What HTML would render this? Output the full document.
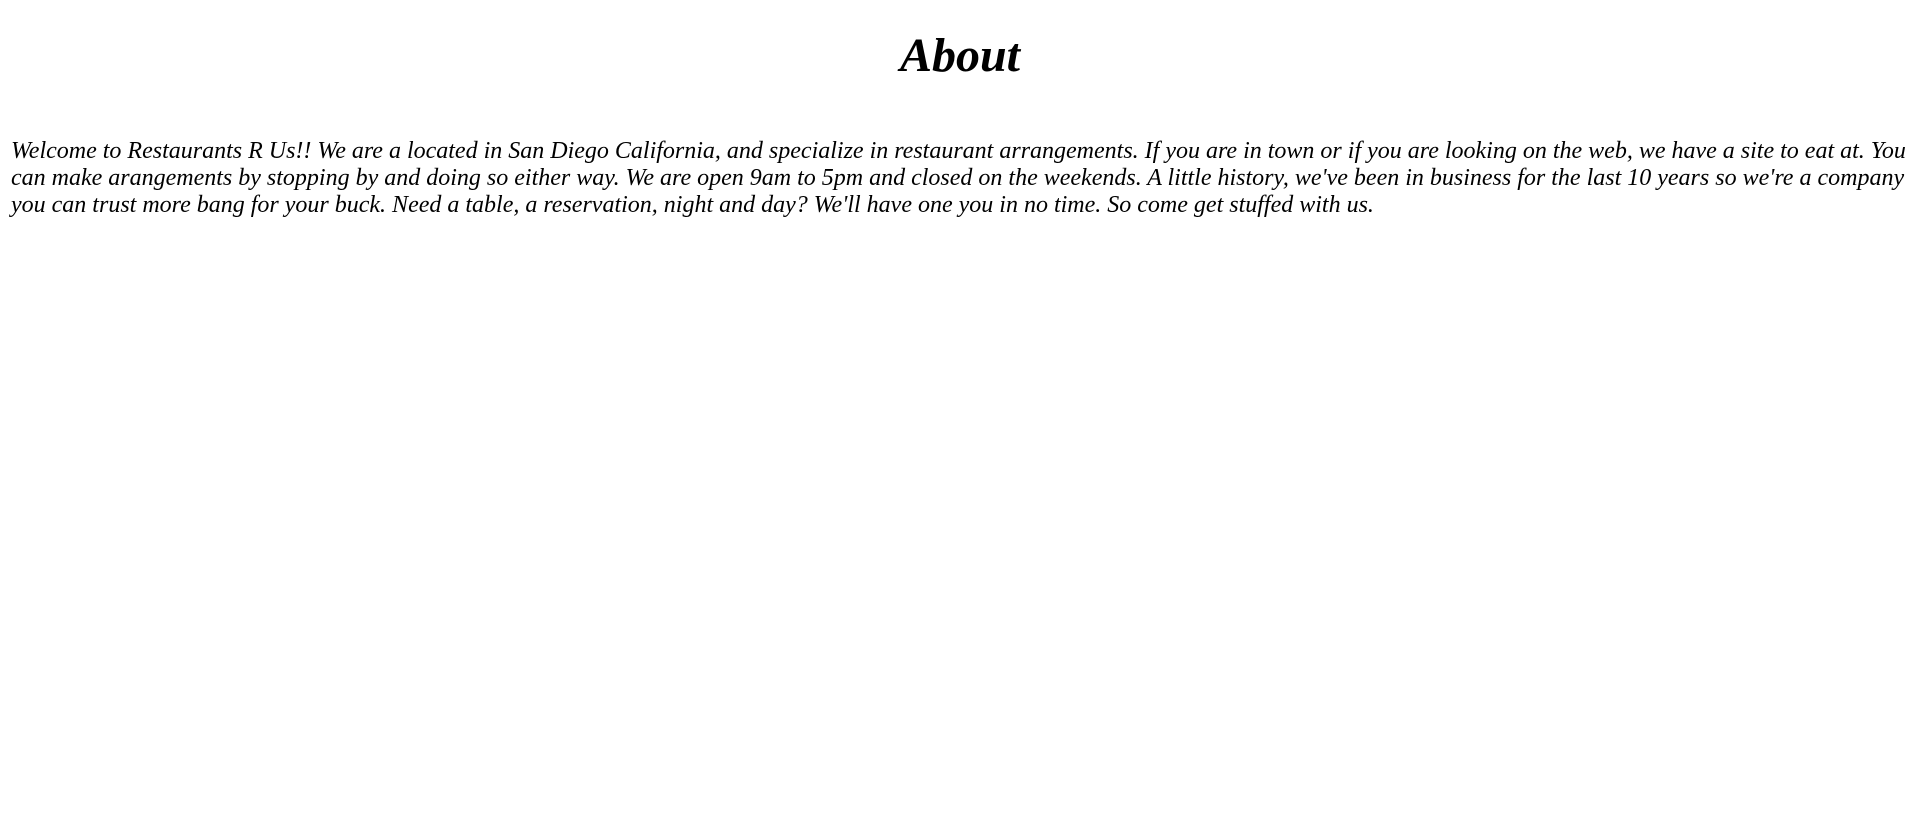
<!DOCTYPE html>
<html><head><meta charset="utf-8"><style>
html,body{margin:0;padding:0;background:#fff;width:1920px;height:813px;overflow:hidden}
body{font-family:"Liberation Serif","Times New Roman",serif;font-style:italic;color:#000}
h1{position:absolute;left:0;top:27px;width:1920px;margin:0;text-align:center;font-size:48px;font-weight:bold;line-height:57px}
p{position:absolute;left:11px;top:137.5px;margin:0;font-size:24px;line-height:27px;white-space:nowrap}
</style></head><body>
<h1>About</h1>
<p>Welcome to Restaurants R Us!! We are a located in San Diego California, and specialize in restaurant arrangements. If you are in town or if you are looking on the web, we have a site to eat at. You<br>can make arangements by stopping by and doing so either way. We are open 9am to 5pm and closed on the weekends. A little history, we've been in business for the last 10 years so we're a company<br>you can trust more bang for your buck. Need a table, a reservation, night and day? We'll have one you in no time. So come get stuffed with us.</p>
</body></html>
